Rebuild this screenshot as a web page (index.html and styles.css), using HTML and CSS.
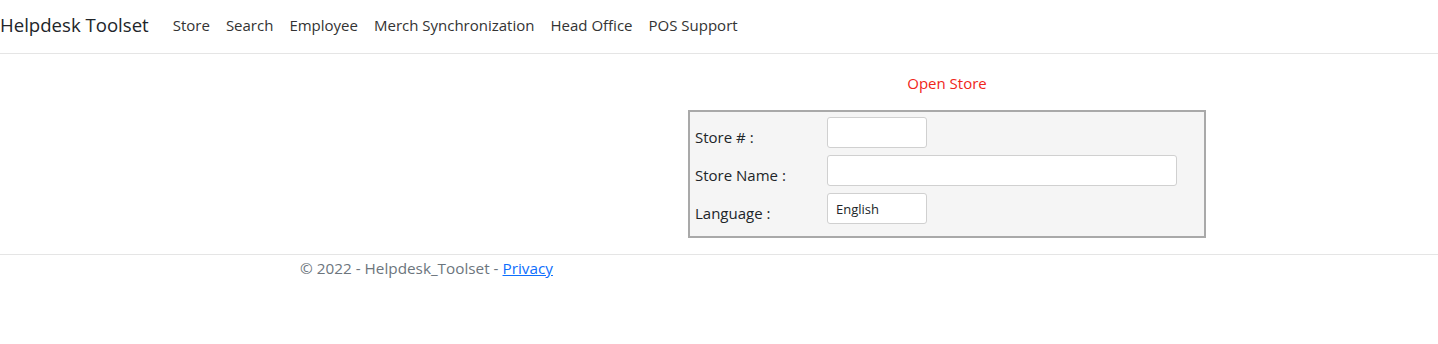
FILE: index.html
```html
<!DOCTYPE html>
<html lang="en">
<head>
    <meta charset="UTF-8">
    <title>Helpdesk Toolset</title>
    <link rel="stylesheet" href="styles.css">
</head>
<body>
    <header class="navbar">
        <a class="brand" href="#">Helpdesk Toolset</a>
        <nav class="nav-links">
            <a href="#">Store</a>
            <a href="#">Search</a>
            <a href="#">Employee</a>
            <a href="#">Merch Synchronization</a>
            <a href="#">Head Office</a>
            <a href="#">POS Support</a>
        </nav>
    </header>

    <main class="content">
        <div class="store-panel">
            <div class="panel-title">Open Store</div>
            <div class="store-box">
                <div class="form-row">
                    <label>Store # :</label>
                    <input type="text" class="field field-short">
                </div>
                <div class="form-row">
                    <label>Store Name :</label>
                    <input type="text" class="field field-long">
                </div>
                <div class="form-row">
                    <label>Language :</label>
                    <select class="field field-short">
                        <option>English</option>
                    </select>
                </div>
            </div>
        </div>
    </main>

    <footer class="footer">
        <div class="footer-text">&copy; 2022 - Helpdesk_Toolset - <a href="#">Privacy</a></div>
    </footer>
</body>
</html>
```

FILE: styles.css
```css
body {
    font-family: 'Open Sans', 'Noto Sans', sans-serif;
    font-size: 15px;
    margin: 0;
    color: #212529;
    background-color: #fff;
}
.navbar {
    display: flex;
    align-items: center;
    height: 54px;
    padding-bottom: 4px;
    border-bottom: 1px solid #e5e5e5;
    box-sizing: border-box;
}
.brand {
    font-size: 18.6px;
    color: #212529;
    text-decoration: none;
    margin-right: 16px;
}
.nav-links {
    display: flex;
}
.nav-links a {
    color: #333;
    text-decoration: none;
    padding: 0 8px;
}
.content {
    display: flex;
    padding-left: 688px;
    padding-top: 18px;
    padding-bottom: 16px;
}
.store-panel {
    width: 518px;
}
.panel-title {
    color: #f0261a;
    text-align: center;
    line-height: 22px;
    margin-bottom: 16px;
}
.store-box {
    background-color: #f5f5f5;
    border: 2px solid #a9a9a9;
    padding: 5px 5px 12px 5px;
    display: flex;
    flex-direction: column;
    gap: 7px;
}
.form-row {
    display: flex;
    align-items: flex-end;
}
.form-row label {
    width: 132px;
    line-height: 22px;
}
.field {
    height: 31px;
    box-sizing: border-box;
    border: 1px solid #d0d0d0;
    border-radius: 3px;
    background-color: #fff;
    font-family: inherit;
    font-size: 13px;
    padding: 0 8px;
}
.field-short {
    width: 100px;
}
.field-long {
    width: 350px;
}
select.field {
    appearance: none;
    color: #212529;
}
.footer {
    border-top: 1px solid #e5e5e5;
    padding: 1px 0 0 300px;
    color: #6c757d;
    font-size: 15.3px;
}
.footer-text {
    line-height: 24px;
}
.footer a {
    color: #0d6efd;
}
```
